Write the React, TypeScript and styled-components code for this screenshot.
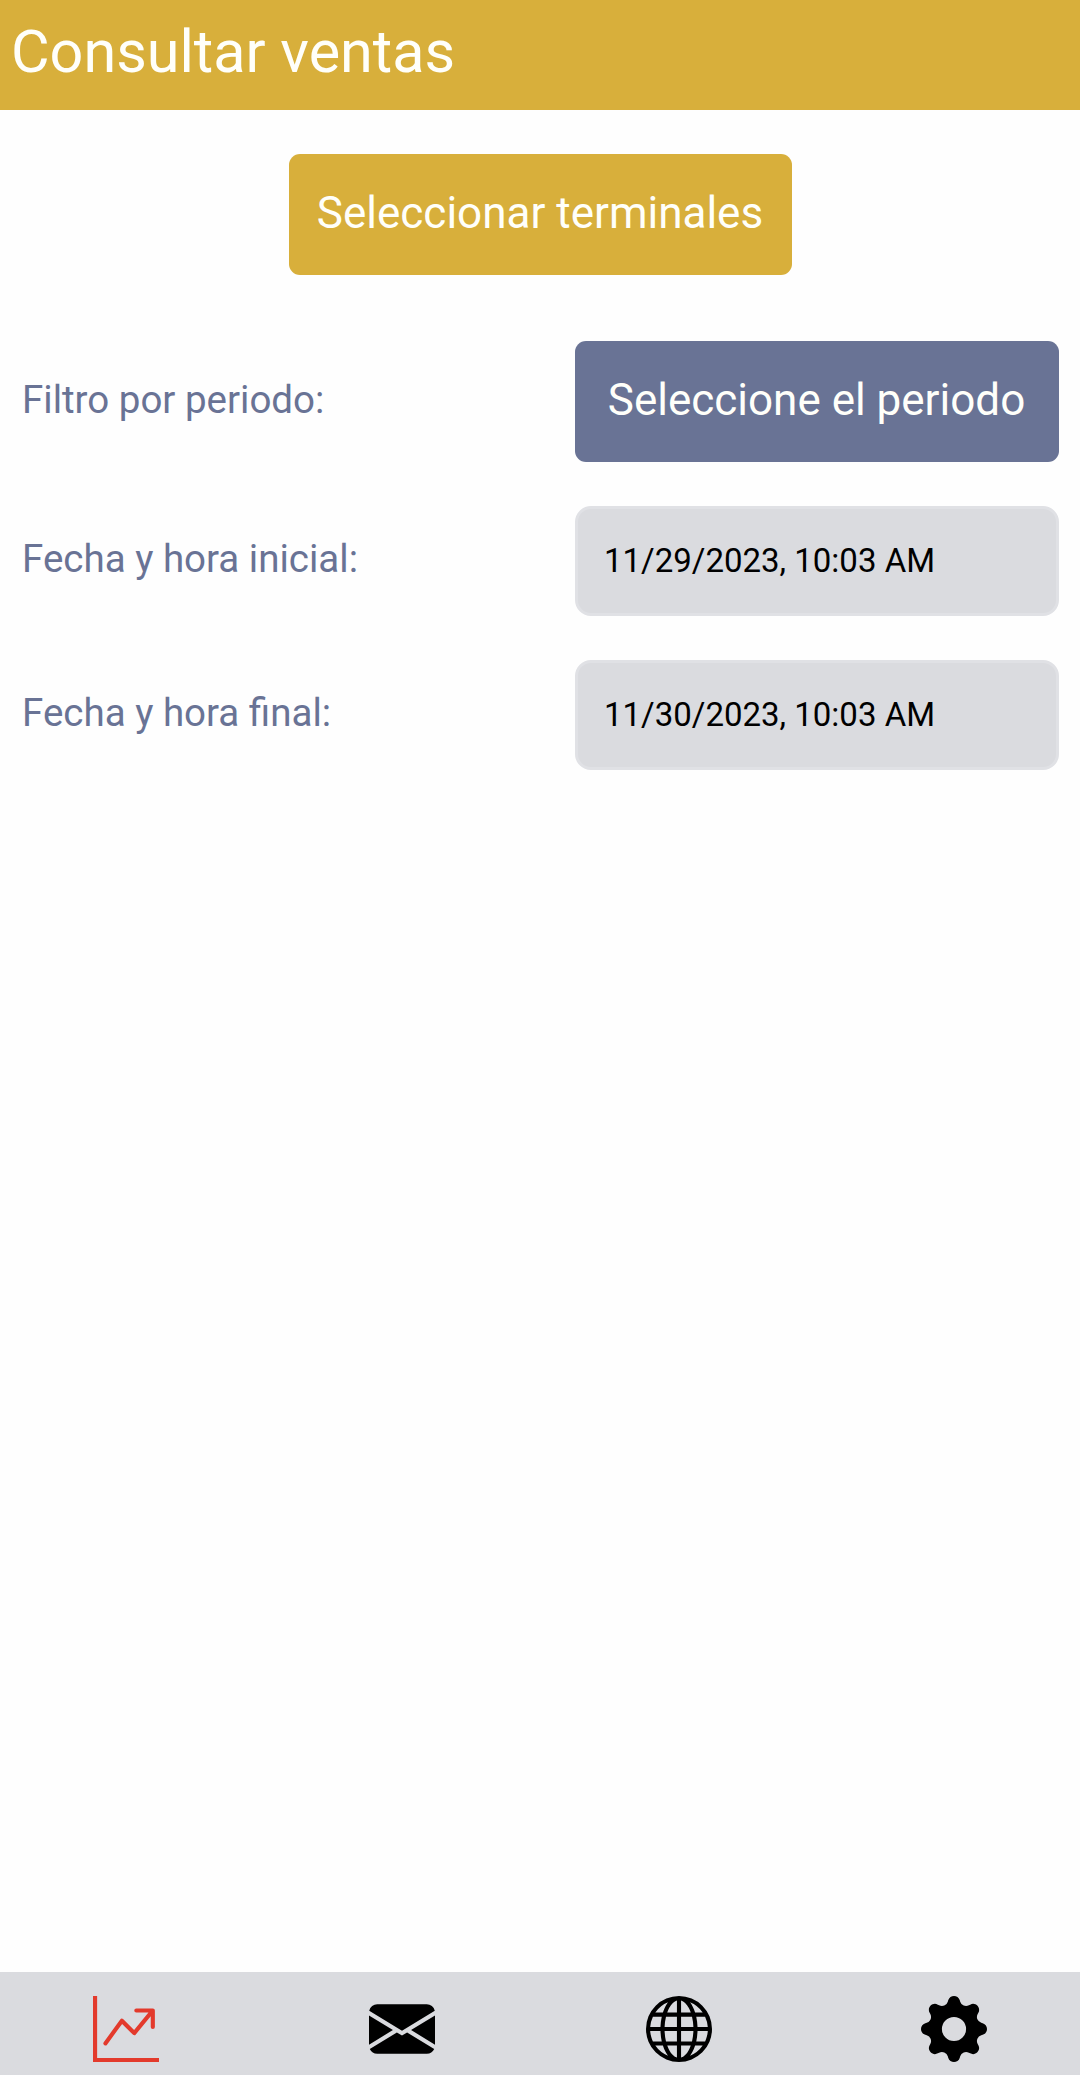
import React from "react";
import styled, { createGlobalStyle } from "styled-components";
import { BsGraphUpArrow, BsEnvelopeFill, BsGlobe, BsGearFill } from "react-icons/bs";

const GlobalStyle = createGlobalStyle`
  * { box-sizing: border-box; }
  body { margin: 0; background: #fefefe; }
`;

const Screen = styled.div`
  display: flex;
  flex-direction: column;
  height: 2075px;
  width: 1080px;
  overflow: hidden;
  font-family: Roboto, "Liberation Sans", sans-serif;
`;

const Header = styled.header`
  height: 110px;
  padding: 18px 11px 0;
  background: #d8af3b;
`;

const Title = styled.h1`
  margin: 0;
  font-size: 59.3px;
  line-height: 68px;
  font-weight: 400;
  color: #fffffa;
`;

const Content = styled.main`
  flex: 1;
  display: flex;
  flex-direction: column;
  padding: 44px 21px 0 22px;
`;

const Button = styled.button<{ $color: string; $width: number }>`
  display: flex;
  align-items: center;
  justify-content: center;
  width: ${(p) => p.$width}px;
  height: 121px;
  padding: 0 1px 3px 0;
  border: 0;
  border-radius: 11px;
  background: ${(p) => p.$color};
  color: #fffffa;
  font-family: inherit;
  font-size: 44px;
  line-height: 52px;
  white-space: nowrap;
`;

const TerminalPicker = styled.div`
  display: flex;
  justify-content: center;
  margin-bottom: 66px;
`;

const Filters = styled.div`
  display: flex;
  flex-direction: column;
  gap: 44px;
`;

const Row = styled.div`
  display: flex;
  align-items: center;
  justify-content: space-between;
`;

const Label = styled.span<{ $lift?: number }>`
  padding-bottom: ${(p) => p.$lift ?? 5}px;
  font-size: 38.5px;
  line-height: 46px;
  color: #697395;
`;

const DateField = styled.div`
  display: flex;
  align-items: center;
  width: 484px;
  height: 110px;
  padding: 0 26px 2px;
  border: 3px solid #e0e1e5;
  border-radius: 16px;
  background: #dadbdf;
  color: #000;
  font-size: 33px;
  line-height: 39px;
`;

const TabBar = styled.nav`
  display: grid;
  grid-template-columns: 275.5px 277px 275.5px 66px;
  height: 103px;
  padding: 24.4px 0 0 93.4px;
  background: #dadbdf;
`;

const Tab = styled.a<{ $active?: boolean }>`
  display: flex;
  color: ${(p) => (p.$active ? "#e33a2c" : "#000")};
  svg {
    width: 66px;
    height: 66px;
    flex: none;
  }
`;

export default function App() {
  return (
    <Screen>
      <GlobalStyle />
      <Header>
        <Title>Consultar ventas</Title>
      </Header>
      <Content>
        <TerminalPicker>
          <Button $color="#d8af3b" $width={503}>Seleccionar terminales</Button>
        </TerminalPicker>
        <Filters>
          <Row>
            <Label $lift={3}>Filtro por periodo:</Label>
            <Button $color="#697395" $width={484}>Seleccione el periodo</Button>
          </Row>
          <Row>
            <Label>Fecha y hora inicial:</Label>
            <DateField>11/29/2023, 10:03 AM</DateField>
          </Row>
          <Row>
            <Label>Fecha y hora final:</Label>
            <DateField>11/30/2023, 10:03 AM</DateField>
          </Row>
        </Filters>
      </Content>
      <TabBar>
        <Tab $active><BsGraphUpArrow /></Tab>
        <Tab><BsEnvelopeFill /></Tab>
        <Tab><BsGlobe /></Tab>
        <Tab><BsGearFill /></Tab>
      </TabBar>
    </Screen>
  );
}
